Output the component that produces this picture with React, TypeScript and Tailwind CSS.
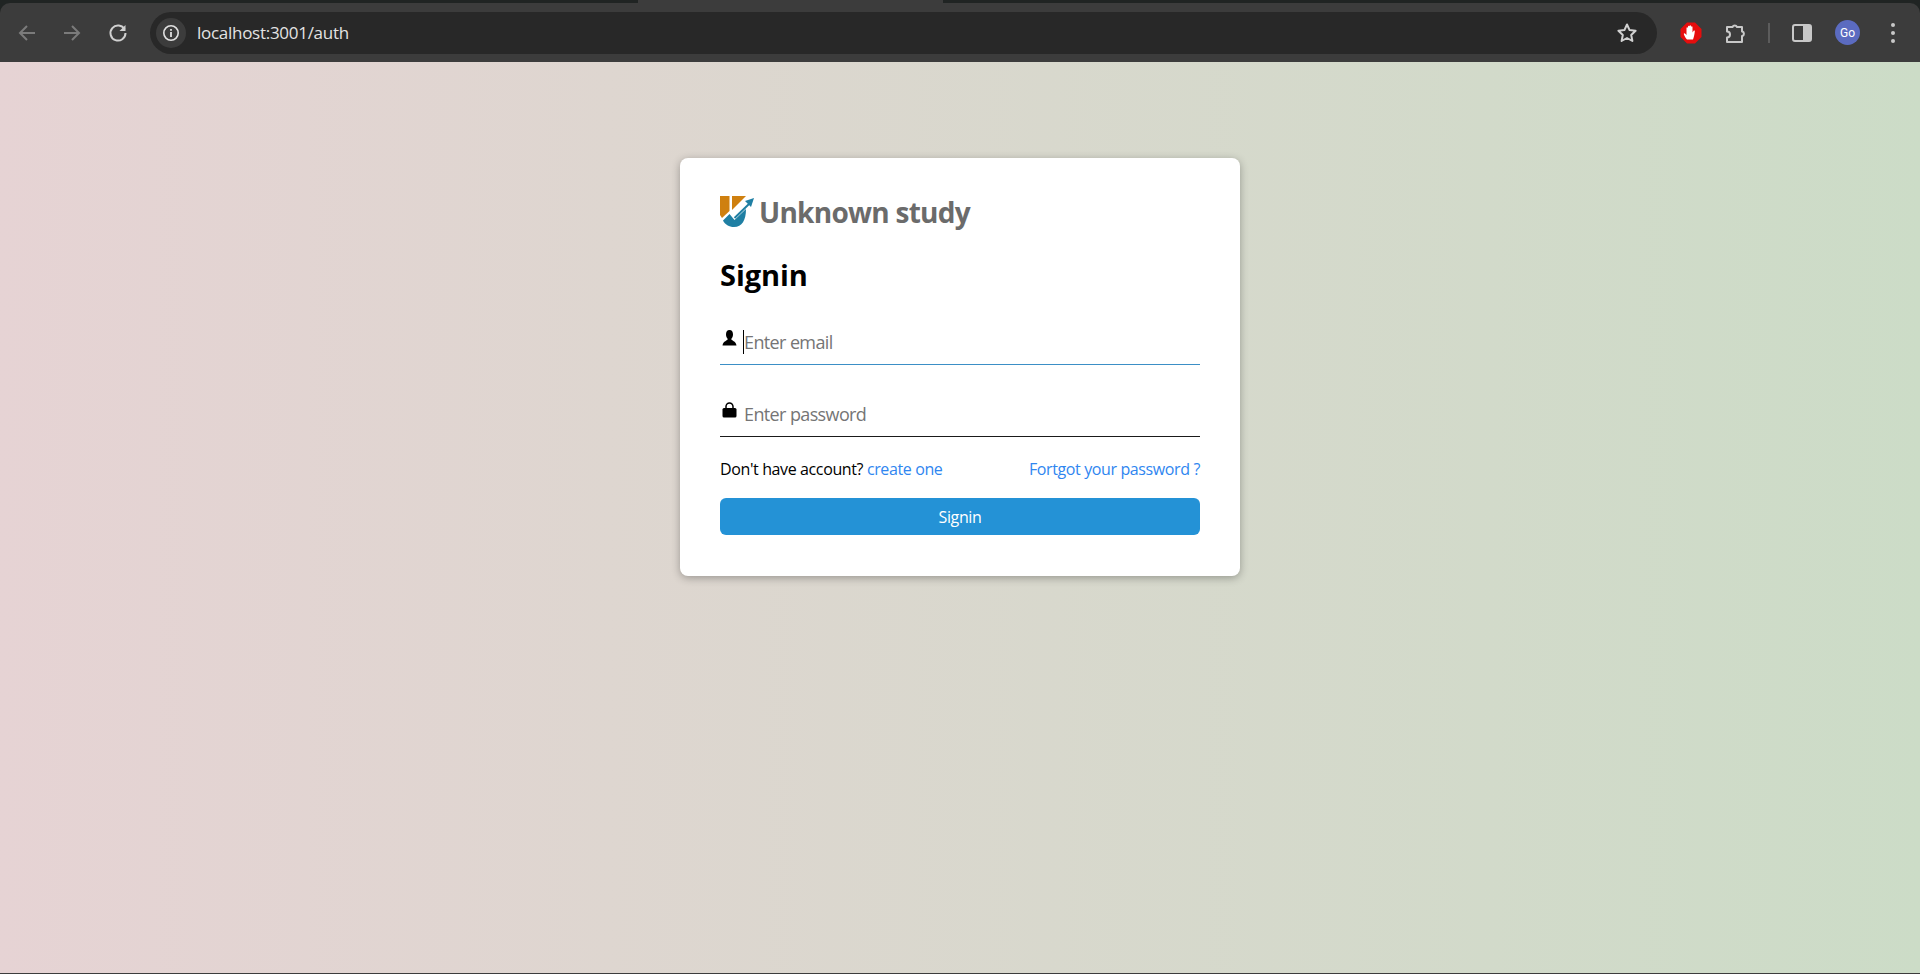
import React from "react";

const font = { fontFamily: '"Open Sans", "Noto Sans", sans-serif' };

function Logo() {
  return (
    <svg width="34" height="32" viewBox="0 0 34 32" className="shrink-0">
      <path d="M0 0H9.500V15L2 22L0 19Z" fill="#cf800f" />
      <path d="M12 0H26L12 14Z" fill="#cf800f" />
      <path d="M3 24.500L9.500 18L14.500 24L26 13C26 24 22 31 14 31C9 31 5 28.500 3 24.500Z" fill="#1f7fa3" />
      <path d="M14.500 22L29 8" fill="none" stroke="#1f7fa3" strokeWidth="2" />
      <path d="M34 2L25 5L31 11Z" fill="#1f7fa3" />
    </svg>
  );
}

function Toolbar() {
  return (
    <div className="bg-[#202423] shrink-0">
      <div className="flex h-[3px]">
        <div className="w-[638px] bg-[#202423]" />
        <div className="w-[305px] bg-[#3c3c3c]" />
        <div className="flex-1 bg-[#202423]" />
      </div>
      <div className="h-[59px] bg-[#3c3c3c] rounded-t-[10px] flex items-center pl-[15px]">
        <svg width="24" height="24" viewBox="0 0 24 24" fill="none" stroke="#7b7b7b" strokeWidth="2" className="shrink-0">
          <path d="M20 12H5M12 5l-7 7 7 7" />
        </svg>
        <svg width="24" height="24" viewBox="0 0 24 24" fill="none" stroke="#7b7b7b" strokeWidth="2" className="shrink-0 ml-[21px]">
          <path d="M4 12h15M12 5l7 7-7 7" />
        </svg>
        <svg width="24" height="24" viewBox="0 0 24 24" fill="none" stroke="#d0d0d0" strokeWidth="2" className="shrink-0 ml-[22px]">
          <path d="M18.600 8.500A7.500 7.500 0 1 0 19.500 12" />
          <path d="M19.500 4v6h-6z" fill="#d0d0d0" stroke="none" />
        </svg>
        <div className="ml-[20px] w-[1507px] h-[42px] rounded-full bg-[#282828] flex items-center pl-[6px] pr-[19px] shrink-0">
          <div className="w-[30px] h-[30px] rounded-full bg-[#3c3c3c] flex items-center justify-center shrink-0">
            <svg width="18" height="18" viewBox="0 0 18 18" fill="none">
              <circle cx="9" cy="9" r="7.200" stroke="#e0e0e0" strokeWidth="1.600" />
              <rect x="8.100" y="8" width="1.800" height="5" fill="#e0e0e0" />
              <rect x="8.100" y="5" width="1.800" height="1.800" fill="#e0e0e0" />
            </svg>
          </div>
          <span className="ml-[11px] text-[17px] text-[#e3e3e3] tracking-[-0.28px]" style={font}>localhost:3001/auth</span>
          <div className="flex-1" />
          <svg width="22" height="22" viewBox="0 0 22 22" fill="none" stroke="#d0d0d0" strokeWidth="2">
            <path d="M11 2.500l2.600 5.600 6 .7-4.400 4.200 1.200 6L11 16l-5.400 3 1.200-6L2.400 8.800l6-.7z" strokeLinejoin="round" />
          </svg>
        </div>
        <svg width="22" height="22" viewBox="0 0 22 22" className="shrink-0 ml-[23px]">
          <path d="M7 0.500H15L21.500 7V15L15 21.500H7L0.500 15V7Z" fill="#e60d0d" />
          <path d="M7 17.500c-1-1-3-4-3.200-5.500 0-1 1-1 1.500-.3L6.500 13V6c0-1 1.400-1 1.500 0v3V4.500c0-1 1.500-1 1.500 0V9V4c0-1 1.500-1 1.500 0v5V5c0-1 1.500-1 1.500 0v5.500l1-1.500c.6-.8 1.600-.3 1.300.5C14.500 12 14 15 13 17.500z" fill="#ffffff" />
        </svg>
        <svg width="24" height="24" viewBox="0 0 24 24" fill="none" stroke="#c8c8c8" strokeWidth="2" strokeLinejoin="round" className="shrink-0 ml-[22px]">
          <path d="M3 6H8.500a2.500 2.500 0 0 1 4.500 0H18v4.500h.5a2.500 2.500 0 0 1 0 4.500H18V21H3V16.500a3 3 0 0 0 0-6Z" />
        </svg>
        <div className="w-[2px] h-[20px] bg-[#5c5c5c] ml-[20px] shrink-0" />
        <svg width="20" height="20" viewBox="0 0 20 20" className="shrink-0 ml-[22px]">
          <rect x="1" y="2" width="18" height="16" rx="2" fill="none" stroke="#c8c8c8" strokeWidth="2" />
          <rect x="11" y="2" width="8" height="16" fill="#c8c8c8" />
        </svg>
        <div className="w-[25px] h-[25px] rounded-full bg-[#5b6bc0] text-white text-[12px] flex items-center justify-center ml-[23px] shrink-0" style={{ fontFamily: "Roboto, sans-serif" }}>Go</div>
        <div className="flex flex-col gap-[4px] ml-[31px] shrink-0">
          <span className="w-[4px] h-[4px] rounded-full bg-[#c8c8c8]" />
          <span className="w-[4px] h-[4px] rounded-full bg-[#c8c8c8]" />
          <span className="w-[4px] h-[4px] rounded-full bg-[#c8c8c8]" />
        </div>
      </div>
    </div>
  );
}

export default function App() {
  return (
    <div className="h-[974px] flex flex-col overflow-hidden" style={font}>
      <Toolbar />
      <main className="flex-1 bg-gradient-to-r from-[#e6d3d4] to-[#ccdcc7] flex justify-center items-start pt-[96px]">
        <div className="w-[560px] h-[418px] bg-white rounded-[8px] shadow-[0_2px_8px_rgba(0,0,0,0.3)] px-[40px] pt-[34px]">
          <div className="flex items-center gap-[5px] h-[40px]">
            <Logo />
            <span className="text-[28px] font-bold text-[#6b6b6b] tracking-[-0.73px]">Unknown study</span>
          </div>
          <h1 className="text-[29px] font-bold text-black mt-[23px] leading-[40px] tracking-[-0.05px]">Signin</h1>
          <div className="mt-[25px] h-[45px] border-b border-[#3b8fc6] flex items-center pl-[2px]">
            <svg width="15" height="16" viewBox="0 0 15 16" className="shrink-0 mb-[9px]">
              <path d="M7.500 0C10 0 11 2 11 4.500C11 6.500 10 8 9.200 9C9.200 10.500 14 11 14.500 15.500H0.500C1 11 5.800 10.500 5.800 9C5 8 4 6.500 4 4.500C4 2 5 0 7.500 0Z" fill="#000" />
            </svg>
            <span className="w-px h-[24px] bg-black ml-[6px] shrink-0" />
            <input placeholder="Enter email" className="flex-1 outline-none bg-transparent text-[18px] tracking-[-0.62px] placeholder:text-[#757575]" />
          </div>
          <div className="mt-[27px] h-[45px] border-b border-[#1a1a1a] flex items-center pl-[2px]">
            <svg width="15" height="16" viewBox="0 0 15 16" className="shrink-0 mb-[8px]">
              <path d="M4 6.500V4.500a3.500 3.500 0 0 1 7 0v2" fill="none" stroke="#000" strokeWidth="1.500" />
              <rect x="0.500" y="6" width="14" height="9.500" rx="1.500" fill="#000" />
            </svg>
            <input placeholder="Enter password" className="flex-1 ml-[7px] outline-none bg-transparent text-[18px] tracking-[-0.62px] placeholder:text-[#757575]" />
          </div>
          <div className="mt-[21px] flex justify-between text-[16px] leading-[22px] tracking-[-0.38px]">
            <span className="text-black">Don't have account? <a className="text-[#2f86f0]">create one</a></span>
            <a className="text-[#2f86f0]">Fortgot your password ?</a>
          </div>
          <button className="mt-[18px] w-full h-[37px] rounded-[6px] bg-[#2492d6] text-white text-[16px] tracking-[-0.38px]">Signin</button>
        </div>
      </main>
      <div className="h-px bg-[#3c3c3c] shrink-0" />
    </div>
  );
}
